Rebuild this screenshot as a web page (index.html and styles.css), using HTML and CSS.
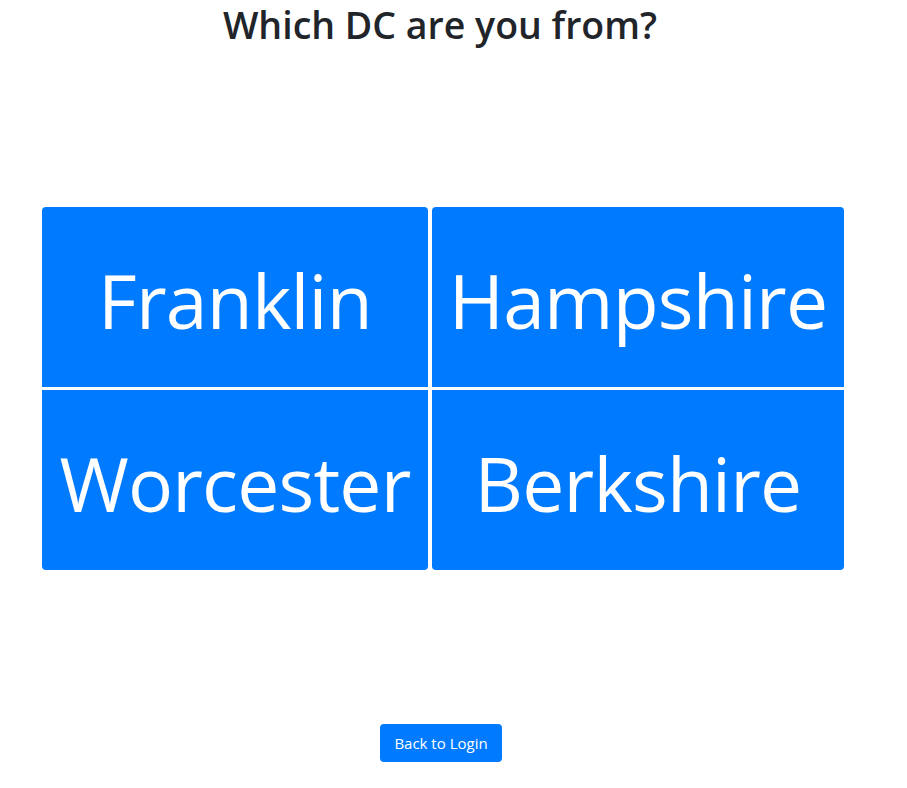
FILE: index.html
```html
<!DOCTYPE html>
<html lang="en">
<head>
<meta charset="utf-8">
<title>Which DC are you from?</title>
<link rel="stylesheet" href="styles.css">
</head>
<body>
<div class="page">
  <h1 class="title">Which DC are you from?</h1>
  <div class="dc-grid">
    <button class="dc-btn top">Franklin</button>
    <button class="dc-btn top">Hampshire</button>
    <button class="dc-btn bottom">Worcester</button>
    <button class="dc-btn bottom">Berkshire</button>
  </div>
  <div class="actions">
    <button class="back-btn">Back to Login</button>
  </div>
</div>
</body>
</html>
```

FILE: styles.css
```css
html, body {
  margin: 0;
  padding: 0;
  background: #fff;
}
body {
  font-family: "Open Sans", "Noto Sans", "Liberation Sans", sans-serif;
  color: #212529;
}
.page {
  width: 886px;
  display: flex;
  flex-direction: column;
  align-items: center;
}
.title {
  margin: 0;
  padding: 0 6px 0 0;
  font-size: 37.5px;
  font-weight: 600;
  line-height: 50px;
  text-align: center;
}
.dc-grid {
  margin-top: 157px;
  display: grid;
  grid-template-columns: 386px 412px;
  grid-auto-rows: 180px;
  column-gap: 4px;
  row-gap: 3px;
}
.dc-btn {
  border: 0;
  margin: 0;
  padding: 6px 0 0 0;
  background: #007bff;
  color: #fff;
  font-family: "Open Sans", "Noto Sans", "Liberation Sans", sans-serif;
  font-size: 75px;
  font-weight: 400;
  letter-spacing: -0.8px;
  line-height: 1;
  display: flex;
  align-items: center;
  justify-content: center;
  cursor: pointer;
}
.dc-btn.top {
  border-radius: 4px 4px 0 0;
}
.dc-btn.bottom {
  border-radius: 0 0 4px 4px;
}
.actions {
  margin-top: 154px;
  padding-right: 4px;
  display: flex;
  justify-content: center;
}
.back-btn {
  border: 0;
  border-radius: 4px;
  background: #007bff;
  color: #fff;
  font-family: "Open Sans", "Noto Sans", "Liberation Sans", sans-serif;
  font-size: 15px;
  line-height: 24px;
  padding: 7px 0;
  width: 122px;
  height: 38px;
  cursor: pointer;
}
```
